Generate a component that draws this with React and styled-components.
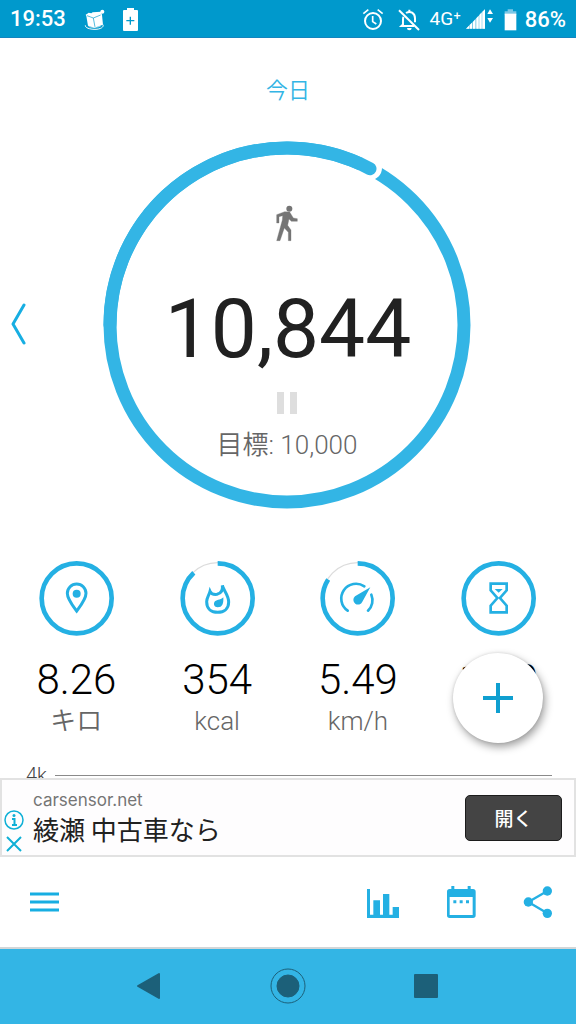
import React from "react";
import styled, { createGlobalStyle, ThemeProvider } from "styled-components";

const theme = {
  accent: "#33b5e5",
  accentDark: "#0099cc",
  text: "#212121",
  muted: "#757575",
  label: "#666",
};

const GlobalStyle = createGlobalStyle`
  * { box-sizing: border-box; }
  html, body { margin: 0; padding: 0; background: #fff; }
  body { font-family: Roboto, "Noto Sans CJK JP", sans-serif; color: #212121; }
  button { appearance: none; border: 0; padding: 0; background: none; font: inherit; color: inherit; cursor: pointer; }
  svg { display: block; flex: none; }
  p, h1 { margin: 0; font-weight: 400; }
`;

const Screen = styled.div`
  display: flex;
  flex-direction: column;
  height: 100vh;
`;

const StatusBar = styled.header`
  display: flex;
  align-items: center;
  justify-content: space-between;
  flex: none;
  height: 38px;
  padding: 0 10px;
  background: ${(p) => p.theme.accentDark};
  color: #fff;
  font-size: 22px;
  line-height: 26px;
  font-weight: 500;
  border-bottom: 1px solid #1385bf;
`;

const StatusGroup = styled.div`
  display: flex;
  align-items: center;
  gap: ${(p) => p.$gap}px;
  padding-top: 1px;
`;

const Network = styled.span`
  display: flex;
  align-items: center;
  gap: 4px;
  font-size: 19px;
  font-weight: 400;
`;

const Body = styled.div`
  position: relative;
  flex: 1;
  min-height: 0;
  display: flex;
`;

const Scroller = styled.main`
  flex: 1;
  overflow-y: auto;
  scrollbar-width: none;
  padding-top: 37px;
`;

const DayTitle = styled.h1`
  color: ${(p) => p.theme.accent};
  font-size: 22px;
  font-weight: 350;
  line-height: 32px;
  text-align: center;
`;

const DayRow = styled.section`
  display: grid;
  grid-template-columns: 1fr auto 1fr;
  align-items: center;
  margin-top: 34px;
  padding-right: 2px;
`;

const PrevButton = styled.button`
  justify-self: start;
  padding: 9px;
`;

const Dial = styled.div`
  display: grid;
  > * { grid-area: 1 / 1; }
`;

const DialContent = styled.div`
  display: flex;
  flex-direction: column;
  align-items: center;
  padding-top: 64px;
`;

const Steps = styled.p`
  margin-top: 45px;
  padding-left: 2px;
  font-size: 82px;
  line-height: 84px;
`;

const PauseButton = styled.button`
  display: flex;
  gap: 6px;
  margin-top: 21px;
`;

const PauseBar = styled.span`
  width: 7px;
  height: 22px;
  background: #dedede;
`;

const Goal = styled.p`
  margin-top: 15px;
  color: ${(p) => p.theme.label};
  font-size: 26px;
  font-weight: 350;
  line-height: 32px;
`;

const Stats = styled.section`
  display: grid;
  grid-template-columns: repeat(4, 1fr);
  margin-top: 52px;
  padding: 0 7px 0 6px;
`;

const Stat = styled.div`
  display: flex;
  flex-direction: column;
  align-items: center;
  height: 174px;
`;

const StatValue = styled.p`
  margin-top: 20px;
  color: #000;
  font-size: 42px;
  font-weight: 300;
  line-height: 48px;
`;

const StatUnit = styled.p`
  margin-top: 3px;
  color: ${(p) => p.theme.label};
  font-size: 26px;
  font-weight: 350;
  line-height: 28px;
`;

const ChartAxis = styled.section`
  display: flex;
  align-items: center;
  gap: 8px;
  margin-top: 28px;
  padding: 0 24px 0 26px;
  color: #444;
  font-size: 20px;
  font-weight: 300;
  line-height: 24px;
`;

const AxisLine = styled.span`
  flex: 1;
  height: 1px;
  background: #8a8a8a;
`;

const AddButton = styled.button`
  position: absolute;
  right: 33px;
  bottom: 35px;
  display: grid;
  place-items: center;
  width: 90px;
  height: 90px;
  border-radius: 50%;
  background: #fff;
  box-shadow: 2px 4px 8px rgba(0, 0, 0, 0.38), 0 0 3px rgba(0, 0, 0, 0.12);
`;

const Ad = styled.aside`
  display: flex;
  align-items: center;
  flex: none;
  height: 79px;
  padding: 0 12px 0 2px;
  border: 2px solid #e2e2e2;
  background: #fefdfe;
`;

const AdControls = styled.div`
  display: flex;
  flex-direction: column;
  align-items: center;
  gap: 6px;
  padding-top: 26px;
`;

const AdText = styled.a`
  flex: 1;
  margin-left: 9px;
  color: ${(p) => p.theme.text};
  text-decoration: none;
`;

const AdSite = styled.span`
  display: block;
  color: ${(p) => p.theme.muted};
  font-family: Inter, sans-serif;
  font-size: 17px;
  line-height: 22px;
`;

const AdHeadline = styled.span`
  display: block;
  font-family: "Noto Sans CJK JP", sans-serif;
  font-size: 26px;
  line-height: 36px;
`;

const AdOpen = styled.button`
  width: 97px;
  height: 46px;
  border: 1px solid #1c1c1c;
  border-radius: 5px;
  background: #444;
  color: #fff;
  font-family: "Noto Sans CJK JP", sans-serif;
  font-size: 19px;
  font-weight: 500;
`;

const Toolbar = styled.nav`
  display: flex;
  align-items: center;
  justify-content: space-between;
  flex: none;
  height: 92px;
  padding: 0 23px 0 30px;
  border-bottom: 2px solid #d2d6d8;
  background: #fff;
`;

const ToolGroup = styled.div`
  display: flex;
  align-items: center;
  gap: 47px;
`;

const SystemNav = styled.footer`
  display: flex;
  align-items: center;
  justify-content: center;
  gap: 108px;
  flex: none;
  height: 75px;
  padding-bottom: 2px;
  background: ${(p) => p.theme.accent};
`;

/* Small drawing with its own coordinate box. */
const Glyph = ({ w, h, box, children, ...rest }) => (
  <svg width={w} height={h} viewBox={box} aria-hidden="true" {...rest}>
    {children}
  </svg>
);

const FolderIcon = () => (
  <Glyph w={22} h={22} box="252 27 66 66" fill="#fff">
    <path d="M257 44l5-3 4-3 8 2 4-3 25-2 2 6 1 4 3 29-26 9-19-6-5-29z" />
    <path d="M261 47l19 7 5 27M280 54l22-9" fill="none" stroke="#0099cc" strokeWidth="2" />
    <circle cx="307" cy="35" r="6" />
    <path d="M256 76c-1 7 12 12 29 12s27-7 24-14" fill="none" stroke="#fff" strokeWidth="3" />
    <path d="M266 79c6 4 28 4 36-1" fill="none" stroke="#fff" strokeWidth="2" />
  </Glyph>
);

const BatteryPlusIcon = () => (
  <Glyph w={15} h={23} box="0 0 45 69">
    <path d="M12 0h21v6h9a3 3 0 0 1 3 3v57a3 3 0 0 1-3 3H3a3 3 0 0 1-3-3V9a3 3 0 0 1 3-3h9z" fill="#fff" />
    <path d="M22 26v24M10 38h24" stroke="#0099cc" strokeWidth="4" />
  </Glyph>
);

const AlarmIcon = () => (
  <Glyph w={22} h={22} box="66 26 66 66" fill="none" stroke="#fff" strokeWidth="6">
    <circle cx="99" cy="62" r="24" />
    <path d="M98 47v17l11 7M70 40l15-12M128 40l-15-12" strokeWidth="5" />
  </Glyph>
);

const BellOffIcon = () => (
  <Glyph w={22} h={22} box="174 26 66 66" fill="none" stroke="#fff" strokeWidth="6">
    <path d="M190 49c-2 7-1 18-1 23l-5 5h38M198 38c13-8 27 0 27 16v12M208 28v8" />
    <path d="M177 30l60 59" />
    <path d="M201 83a7 7 0 0 0 14 0z" fill="#fff" stroke="none" />
  </Glyph>
);

const SignalIcon = () => (
  <Glyph w={29} h={22} box="370 26 87 66" fill="#fff">
    <path d="M373 88L430 30V88z" opacity="0.5" />
    <path d="M373 88l9-9v9zM384 77l7-7v18h-7zM394 68l7-8v28h-7zM404 57l7-8v39h-7zM413 47l7-8v49h-7zM422 37l8-7v58h-8z" />
    <path d="M445 30l9 14h-17zM445 70l9-14h-17z" />
  </Glyph>
);

const BatteryIcon = () => (
  <Glyph w={13} h={22} box="491 26 39 66">
    <path d="M502 27h16v6h10v10h-35V33h9z" fill="#7cc8e6" />
    <path d="M493 40h35v50h-35z" fill="#fff" />
  </Glyph>
);

const WalkIcon = () => (
  <Glyph w={26} h={37} box="525 225 78 111" fill="#757575">
    <circle cx="571" cy="236" r="9" />
    <path d="M533 279V254l24-9 15 1 11 18 12 2v8h-18l-7-7-4 19 10 14v32h-8v-25l-12-13-13 38h-10l17-62 1-13-11 3v19z" stroke="#757575" strokeWidth="1" />
  </Glyph>
);

const ProgressDial = () => (
  <Glyph w={368} h={368} box="0 0 368 368" fill="none" stroke="#33b5e5" strokeWidth="13">
    <circle cx="184" cy="184" r="177" />
    <circle cx="267" cy="27" r="12" fill="#fff" stroke="none" />
    <path d="M7 184A177 177 0 0 1 267 27.700" strokeLinecap="round" />
  </Glyph>
);

/* The ring and its symbol share a 225-unit box. */
const StatRing = ({ progress, cx, children }) => (
  <Glyph w={75} h={75} box={`${cx - 113} 33 225 225`} fill="none" stroke="#24b0e3" strokeWidth="8">
    <circle cx={cx} cy="145" r="107" stroke="#dcdcdc" strokeWidth="4" />
    <circle
      cx={cx}
      cy="145"
      r="105"
      strokeWidth="14"
      pathLength="100"
      strokeDasharray={progress >= 100 ? undefined : `${progress} 100`}
      transform={`rotate(-90 ${cx} 145)`}
    />
    {children}
  </Glyph>
);

const PinRing = () => (
  <StatRing progress={100} cx={170}>
    <path d="M170 183C158 167 142 148 142 130A28 28 0 0 1 198 130C198 148 182 167 170 183Z" strokeWidth="9" />
    <circle cx="170" cy="131" r="12" fill="#24b0e3" stroke="none" />
  </StatRing>
);

const FlameRing = () => (
  <StatRing progress={88} cx={590}>
    <path d="M604 106C608 122 623 135 623 156C623 177 608 187 590 187C572 187 557 177 557 155C557 143 564 136 567 124C570 131 579 134 588 133C601 130 606 119 604 106Z" strokeWidth="9" />
    <path d="M607 142C608 162 604 172 590 172C580 172 577 163 580 157C584 148 598 152 607 142Z" fill="#24b0e3" stroke="none" />
  </StatRing>
);

const GaugeRing = () => (
  <StatRing progress={84} cx={173}>
    <path d="M143 182A43 43 0 0 1 193 109M214 134A43 43 0 0 1 204 182" strokeLinecap="round" />
    <path d="M211 112L187 155A14 14 0 1 1 165 139Z" fill="#24b0e3" stroke="none" />
  </StatRing>
);

const HourglassRing = () => (
  <StatRing progress={100} cx={598}>
    <path d="M574 101H622V121L602 144L622 167V187H574V167L594 144L574 121Z" />
    <path d="M586 117h24l-12 11z" fill="#24b0e3" stroke="none" />
  </StatRing>
);

const stats = [
  { Ring: PinRing, value: "8.26", unit: "キロ" },
  { Ring: FlameRing, value: "354", unit: "kcal" },
  { Ring: GaugeRing, value: "5.49", unit: "km/h" },
  { Ring: HourglassRing, value: "1:30" },
];

export default function App() {
  return (
    <ThemeProvider theme={theme}>
      <GlobalStyle />
      <Screen>
        <StatusBar>
          <StatusGroup $gap={18}>
            <span>19:53</span>
            <StatusGroup as="span" $gap={17}>
              <FolderIcon />
              <BatteryPlusIcon />
            </StatusGroup>
          </StatusGroup>
          <StatusGroup $gap={10}>
            <StatusGroup as="span" $gap={14}>
              <AlarmIcon />
              <BellOffIcon />
            </StatusGroup>
            <Network>
              4G⁺
              <SignalIcon />
            </Network>
            <StatusGroup as="span" $gap={8}>
              <BatteryIcon />
              86%
            </StatusGroup>
          </StatusGroup>
        </StatusBar>

        <Body>
          <Scroller>
            <DayTitle>今日</DayTitle>
            <DayRow>
              <PrevButton aria-label="前の日">
                <Glyph w={18} h={44} box="0 0 18 44" fill="none" stroke="#17aee2" strokeWidth="3" strokeLinecap="round" strokeLinejoin="round">
                  <path d="M15 2L4 21L15 40" />
                </Glyph>
              </PrevButton>
              <Dial>
                <ProgressDial />
                <DialContent>
                  <WalkIcon />
                  <Steps>10,844</Steps>
                  <PauseButton aria-label="一時停止">
                    <PauseBar />
                    <PauseBar />
                  </PauseButton>
                  <Goal>目標: 10,000</Goal>
                </DialContent>
              </Dial>
            </DayRow>
            <Stats>
              {stats.map(({ Ring, value, unit }) => (
                <Stat key={value}>
                  <Ring />
                  <StatValue>{value}</StatValue>
                  {unit && <StatUnit>{unit}</StatUnit>}
                </Stat>
              ))}
            </Stats>
            <ChartAxis>
              <span>4k</span>
              <AxisLine />
            </ChartAxis>
          </Scroller>
          <AddButton aria-label="追加">
            <Glyph w={30} h={30} box="0 0 30 30" stroke="#0f9fd0" strokeWidth="4">
              <path d="M15 0v30M0 15h30" />
            </Glyph>
          </AddButton>
        </Body>

        <Ad>
          <AdControls>
            <button aria-label="広告について">
              <Glyph w={20} h={20} box="0 0 20 20" fill="none" stroke="#0fb0d6">
                <circle cx="10" cy="10" r="9" strokeWidth="1.500" />
                <circle cx="10" cy="5.500" r="1.500" fill="#0fb0d6" stroke="none" />
                <path d="M8 9h2.500v6M8 15h5" strokeWidth="2" />
              </Glyph>
            </button>
            <button aria-label="広告を閉じる">
              <Glyph w={16} h={16} box="0 0 16 16" stroke="#0fb0d6" strokeWidth="2">
                <path d="M1 1l14 14M15 1L1 15" />
              </Glyph>
            </button>
          </AdControls>
          <AdText href="#ad">
            <AdSite>carsensor.net</AdSite>
            <AdHeadline>綾瀬 中古車なら</AdHeadline>
          </AdText>
          <AdOpen>開く</AdOpen>
        </Ad>

        <Toolbar>
          <button aria-label="メニュー">
            <Glyph w={30} h={20} box="0 0 30 20" stroke="#17aee2" strokeWidth="3">
              <path d="M0 2h29M0 10h29M0 18h29" />
            </Glyph>
          </button>
          <ToolGroup>
            <button aria-label="グラフ">
              <Glyph w={32} h={32} box="84 45 96 96" fill="#24b0e3">
                <path d="M84 54h9v77h10V88h20v43h9V69h19v62h10v-23h19v33H84z" />
              </Glyph>
            </button>
            <button aria-label="カレンダー">
              <Glyph w={30} h={32} box="317 45 90 96" fill="#24b0e3">
                <path d="M333 45h9v9h40v-9h9v9h7q8 0 8 8v71q0 8-8 8h-70q-8 0-8-8V62q0-8 8-8h5zM328 78v54h69V78z" fillRule="evenodd" />
                <path d="M339 88h9v9h-9zM358 88h9v9h-9zM377 88h9v9h-9z" />
              </Glyph>
            </button>
            <button aria-label="共有">
              <Glyph w={30} h={32} box="548 49 90 96" fill="#24b0e3">
                <path d="M621 64L564 97L621 131" fill="none" stroke="#24b0e3" strokeWidth="7" />
                <circle cx="621" cy="64" r="14" />
                <circle cx="564" cy="97" r="14" />
                <circle cx="621" cy="131" r="14" />
              </Glyph>
            </button>
          </ToolGroup>
        </Toolbar>

        <SystemNav>
          <button aria-label="戻る">
            <Glyph w={26} h={28} box="0 0 26 28" fill="#1c6079" stroke="#1c6079" strokeWidth="2" strokeLinejoin="round">
              <path d="M2 14L23 2V26Z" />
            </Glyph>
          </button>
          <button aria-label="ホーム">
            <Glyph w={36} h={36} box="0 0 36 36" fill="none" stroke="#1c6079">
              <circle cx="18" cy="18" r="17" />
              <circle cx="18" cy="18" r="11" fill="#1c6079" />
            </Glyph>
          </button>
          <button aria-label="アプリ履歴">
            <Glyph w={26} h={26} box="0 0 26 26" fill="#1c6079">
              <rect x="0" y="1" width="24" height="24" rx="1" />
            </Glyph>
          </button>
        </SystemNav>
      </Screen>
    </ThemeProvider>
  );
}
